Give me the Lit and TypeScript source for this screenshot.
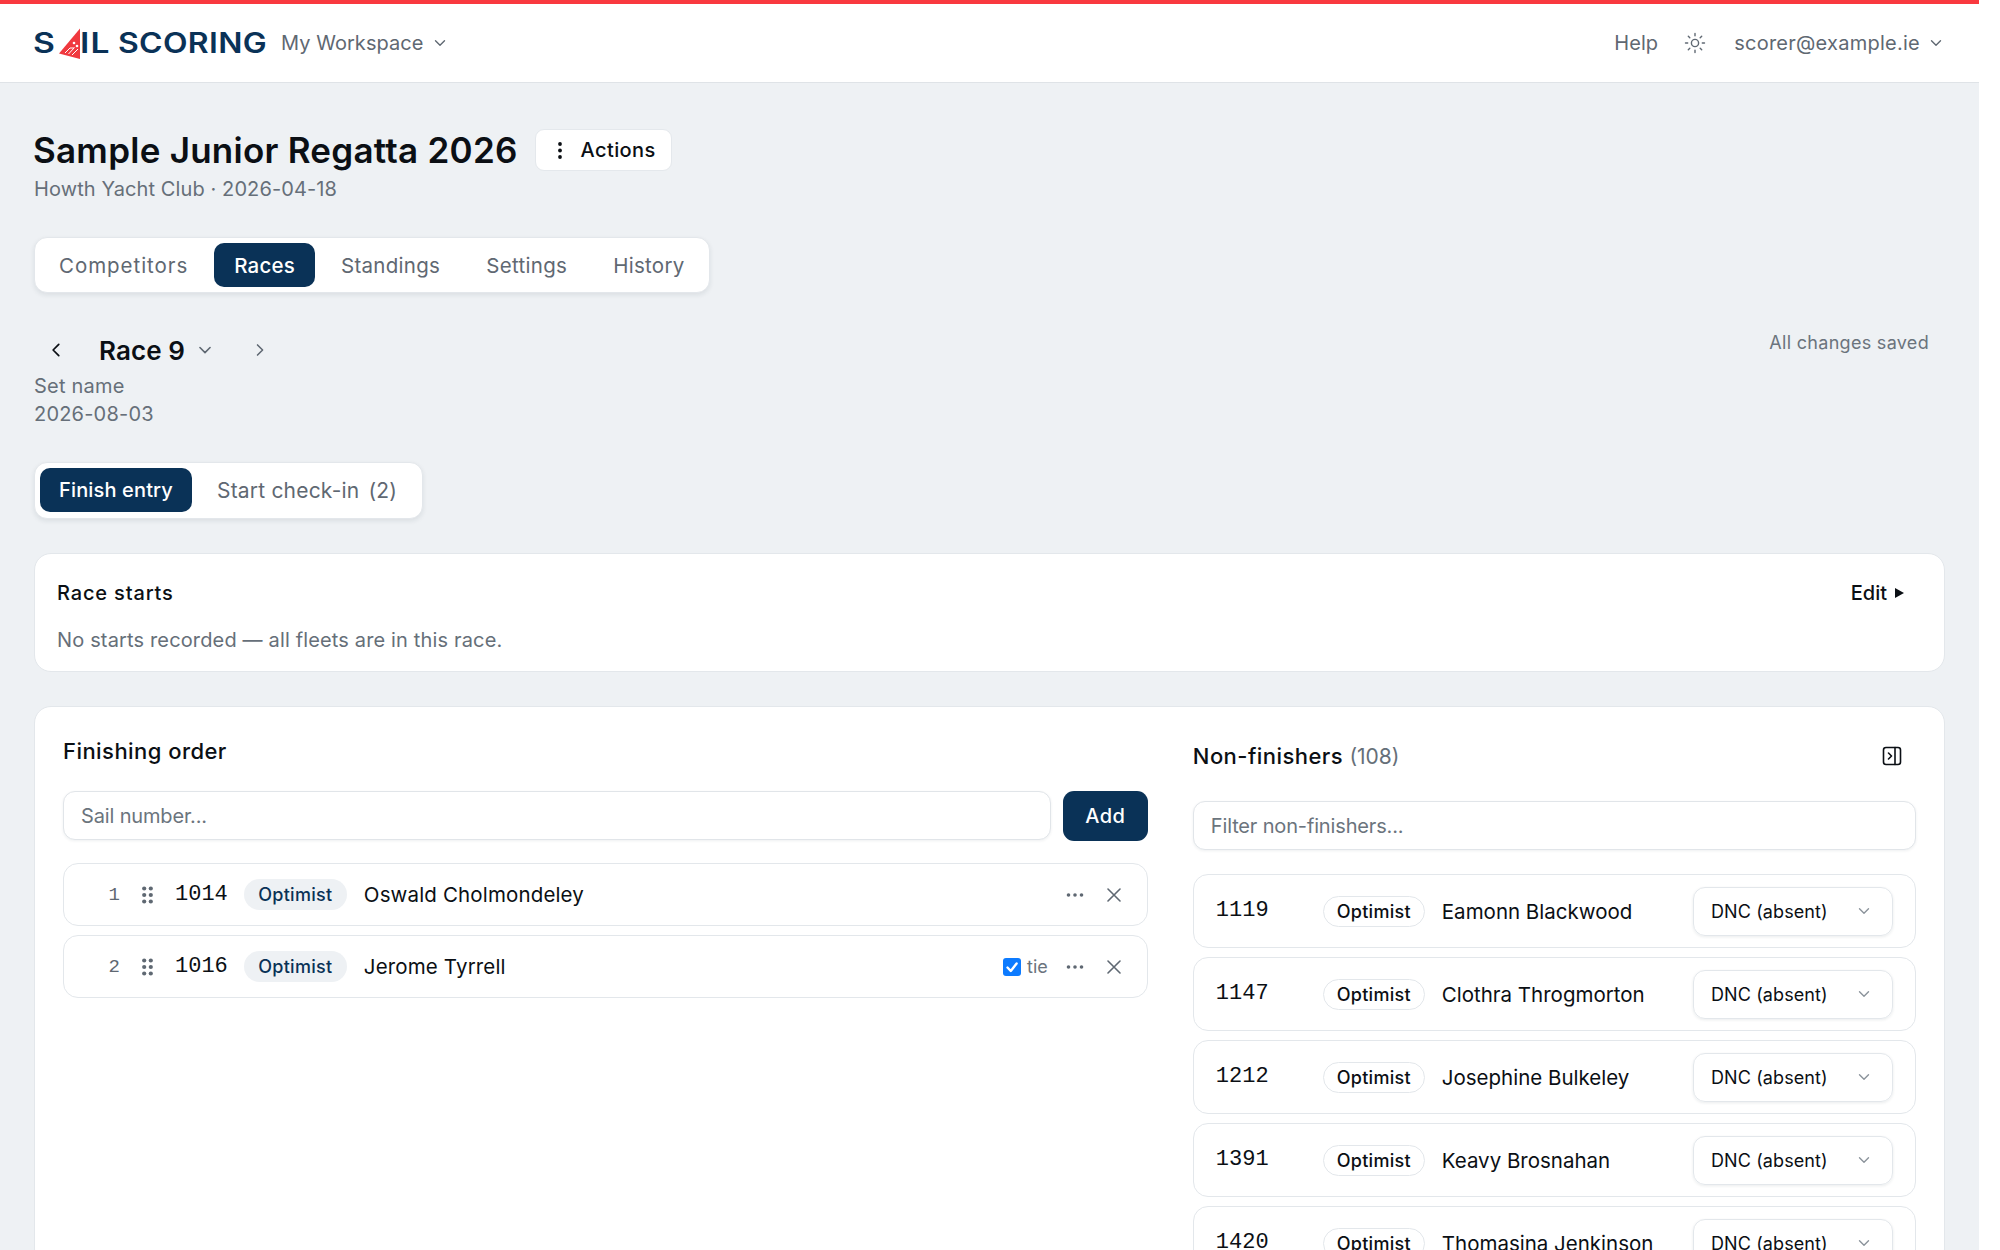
// Race scoring page: finishing order entry and non-finishers for a single race
import { css, html, LitElement, svg } from "lit";
import { customElement } from "lit/decorators.js";

interface Finisher {
  pos: number;
  sail: string;
  name: string;
  tie?: boolean;
}

interface NonFinisher {
  sail: string;
  name: string;
}

const FINISHERS: Finisher[] = [
  { pos: 1, sail: "1014", name: "Oswald Cholmondeley" },
  { pos: 2, sail: "1016", name: "Jerome Tyrrell", tie: true },
];

const NON_FINISHERS: NonFinisher[] = [
  { sail: "1119", name: "Eamonn Blackwood" },
  { sail: "1147", name: "Clothra Throgmorton" },
  { sail: "1212", name: "Josephine Bulkeley" },
  { sail: "1391", name: "Keavy Brosnahan" },
  { sail: "1420", name: "Thomasina Jenkinson" },
];

const TABS = ["Competitors", "Races", "Standings", "Settings", "History"];

const chevron = (d: string, size = 16, cls = "") => html`
  <svg class=${cls} width=${size} height=${size} viewBox="0 0 16 16" fill="none" stroke="currentColor" stroke-width="1.4" stroke-linecap="round" stroke-linejoin="round">
    <path d=${d}></path>
  </svg>
`;

const DOWN = "M3.5 5.8 8 10.3l4.5-4.5";
const LEFT = "M10.2 3.5 5.7 8l4.5 4.5";
const RIGHT = "M5.8 3.5 10.3 8l-4.5 4.5";

@customElement("app-root")
export class AppRoot extends LitElement {
  static styles = css`
    :host {
      display: flex;
      height: 1250px;
      overflow: hidden;
      background: #fff;
      font-family: Inter, "Open Sans", sans-serif;
      color: #0b0f14;
    }

    * {
      box-sizing: border-box;
    }

    .page {
      width: 1979px;
      flex: none;
      background: #eef1f4;
    }

    /* Top nav */
    .nav {
      height: 83px;
      background: #fff;
      border-top: 4px solid #f9393f;
      border-bottom: 1px solid #dfe3e7;
      display: flex;
      align-items: center;
      padding: 0 35px 0 33px;
      color: #5f6872;
      font-size: 20px;
    }

    .logo {
      display: flex;
      align-items: center;
      width: 248px;
      flex: none;
      height: 40px;
      color: #0a3257;
      font-size: 28px;
      font-weight: 600;
      line-height: 40px;
    }

    .logo-s {
      width: 26px;
      transform: scaleX(1.2);
      transform-origin: left;
    }

    .logo-il {
      width: 38px;
      margin-left: -1px;
      letter-spacing: 1px;
      transform: scaleX(1.2);
      transform-origin: left;
    }

    .logo-name {
      letter-spacing: 0.3px;
      transform: scaleX(1.14);
      transform-origin: left;
    }

    .sail {
      flex: none;
      margin-top: 1px;
    }

    .workspace {
      display: flex;
      align-items: center;
      gap: 9px;
      letter-spacing: 0.05px;
    }

    .nav-right {
      margin-left: auto;
      display: flex;
      align-items: center;
    }

    .help {
      margin-right: 26px;
      letter-spacing: 0.05px;
    }

    .user {
      display: flex;
      align-items: center;
      gap: 8px;
      margin-left: 28px;
      letter-spacing: 0.25px;
    }

    /* Page header */
    .content {
      padding: 46px 34px 0;
    }

    .title-row {
      display: flex;
      align-items: center;
      gap: 17px;
      height: 42px;
    }

    h1 {
      margin: 0 0 0 -1px;
      font-size: 35px;
      font-weight: 600;
      letter-spacing: 0.25px;
    }

    .actions {
      display: flex;
      align-items: center;
      gap: 19px;
      height: 42px;
      width: 137px;
      padding: 0 0 0 22px;
      background: #fff;
      border: 1px solid #e4e8ec;
      border-radius: 9px;
      font-size: 20px;
      font-weight: 500;
      letter-spacing: 0.4px;
      white-space: nowrap;
    }

    .actions svg {
      flex: none;
    }

    .subtitle {
      margin-top: 6px;
      line-height: 24px;
      font-size: 20px;
      color: #666f79;
      letter-spacing: 0.1px;
    }

    .seg {
      display: inline-flex;
      gap: 6px;
      padding: 5px;
      background: #fff;
      border: 1px solid #e3e7eb;
      border-radius: 13px;
      box-shadow: 0 2px 5px rgba(20, 40, 60, 0.09);
      vertical-align: top;
    }

    .tabs {
      margin-top: 36px;
      height: 56px;
      width: 676px;
    }

    .seg-item {
      display: flex;
      align-items: center;
      justify-content: center;
      height: 44px;
      border-radius: 10px;
      padding: 0 20px;
      font-size: 20.5px;
      letter-spacing: 0.3px;
      color: #5f6872;
      white-space: nowrap;
    }

    .tabs .seg-item:first-child {
      padding: 0 20px 0 19px;
      letter-spacing: 0.95px;
    }

    .seg-item.active {
      background: #0a3257;
      color: #fff;
      font-weight: 500;
      letter-spacing: 0.2px;
    }

    .race-bar {
      display: flex;
      justify-content: space-between;
      margin-top: 37px;
    }

    .race-nav {
      display: flex;
      align-items: center;
      height: 40px;
      color: #0b0f14;
    }

    .race-nav .back {
      margin-left: 12px;
    }

    .race-name {
      margin-left: 33px;
      font-size: 26px;
      font-weight: 600;
      letter-spacing: 0.1px;
    }

    .race-down {
      margin-left: 11px;
      color: #5f6872;
    }

    .race-next {
      margin-left: 37px;
      color: #5f6872;
    }

    .saved {
      margin: 0 16px 0 0;
      padding-top: 1px;
      font-size: 18px;
      line-height: 24px;
      color: #6b747d;
      letter-spacing: 0.3px;
    }

    .race-meta {
      font-size: 20px;
      line-height: 28px;
      color: #666f79;
      margin-top: 2px;
      letter-spacing: 0.2px;
    }

    .subtabs {
      margin-top: 34px;
      height: 57px;
    }

    .subtabs .seg-item {
      padding: 0 20px 0 19px;
      font-size: 21px;
      letter-spacing: 0.2px;
    }

    .subtabs .seg-item.active {
      font-size: 20px;
      padding: 0 19px;
      letter-spacing: 0.15px;
    }

    .count {
      margin-left: 9px;
    }

    .card {
      background: #fff;
      border: 1px solid #e3e7eb;
      border-radius: 17px;
    }

    .starts {
      margin-top: 34px;
      height: 119px;
      padding: 26px 22px 0;
    }

    .starts-head {
      display: flex;
      justify-content: space-between;
      align-items: center;
      height: 26px;
      font-size: 20px;
      font-weight: 500;
      letter-spacing: 0.85px;
    }

    .edit {
      display: flex;
      align-items: center;
      gap: 8px;
      margin-right: 18px;
      letter-spacing: 0;
    }

    .caret {
      width: 0;
      height: 0;
      border-left: 9px solid #0b0f14;
      border-top: 5px solid transparent;
      border-bottom: 5px solid transparent;
    }

    .starts-note {
      margin-top: 21px;
      line-height: 26px;
      font-size: 20px;
      color: #666f79;
      letter-spacing: 0.15px;
    }

    /* Finish entry panel */
    .entry {
      margin-top: 34px;
      height: 560px;
      padding: 29px 28px 0;
      display: grid;
      grid-template-columns: 3fr 2fr;
      column-gap: 45px;
    }

    .panel-title {
      margin: 0;
      font-size: 22px;
      font-weight: 500;
      line-height: 30px;
      letter-spacing: 0.45px;
    }

    .add-row {
      display: flex;
      gap: 12px;
      margin-top: 25px;
    }

    .field {
      display: flex;
      align-items: center;
      height: 49px;
      padding: 0 17px;
      background: #fff;
      border: 1px solid #e1e5e9;
      border-radius: 12px;
      box-shadow: 0 1px 3px rgba(20, 40, 60, 0.07);
      font-size: 20px;
      letter-spacing: -0.15px;
      color: #6b747d;
      flex: 1;
    }

    .add {
      width: 85px;
      height: 50px;
      display: flex;
      align-items: center;
      justify-content: center;
      background: #0a3257;
      color: #fff;
      border-radius: 11px;
      font-size: 20px;
      font-weight: 500;
      letter-spacing: 0.5px;
    }

    .finishers {
      display: flex;
      flex-direction: column;
      gap: 9px;
      margin-top: 22px;
    }

    .finisher {
      display: flex;
      align-items: center;
      height: 63px;
      border: 1px solid #e3e7eb;
      border-radius: 15px;
      font-size: 20.5px;
    }

    .pos {
      width: 56px;
      text-align: right;
      font-family: "Liberation Mono", monospace;
      font-size: 19px;
      color: #5f6872;
    }

    .grip {
      margin-left: 22px;
      color: #5f6872;
    }

    .sail-no {
      font-family: "Liberation Mono", monospace;
      font-size: 22px;
      letter-spacing: 0;
    }

    .finisher .sail-no {
      margin-left: 22px;
    }

    .pill {
      display: flex;
      align-items: center;
      justify-content: center;
      border-radius: 16px;
      font-size: 18px;
      font-weight: 500;
      letter-spacing: 0.3px;
    }

    .finisher .pill {
      width: 103px;
      height: 31px;
      margin-left: 16px;
      background: #eef1f4;
      color: #0a3257;
    }

    .finisher .who {
      margin-left: 17px;
      letter-spacing: 0.15px;
    }

    .row-end {
      margin-left: auto;
      display: flex;
      align-items: center;
      color: #5f6872;
    }

    .tie {
      display: flex;
      align-items: center;
      gap: 6px;
      margin-right: 18px;
      font-size: 18px;
      color: #6b747d;
    }

    .check {
      width: 18px;
      height: 18px;
      border-radius: 3px;
      background: #0d7bff;
    }

    .more {
      margin-right: 23px;
    }

    .remove {
      margin-right: 26px;
    }

    .nf-head {
      display: flex;
      align-items: center;
      justify-content: space-between;
      margin-top: 5px;
      height: 30px;
    }

    .nf-count {
      font-size: 21px;
      font-weight: 400;
      color: #666f79;
      letter-spacing: 0;
    }

    .panel-icon {
      margin-right: 14px;
    }

    .filter {
      margin-top: 30px;
      flex: none;
    }

    .nf-list {
      display: flex;
      flex-direction: column;
      gap: 9px;
      margin-top: 24px;
    }

    .nf {
      display: flex;
      align-items: center;
      height: 74px;
      flex: none;
      padding-left: 22px;
      border: 1px solid #e3e7eb;
      border-radius: 15px;
      font-size: 20.5px;
    }

    .nf .sail-no {
      width: 107px;
      margin-top: -1px;
    }

    .nf .pill {
      width: 102px;
      height: 31px;
      border: 1px solid #e3e7eb;
      background: #fff;
      color: #0b0f14;
    }

    .nf .who {
      margin-left: 17px;
    }

    .select {
      margin-left: auto;
      margin-right: 22px;
      width: 200px;
      height: 49px;
      display: flex;
      align-items: center;
      justify-content: space-between;
      padding: 0 20px 0 17px;
      border: 1px solid #e3e7eb;
      border-radius: 12px;
      box-shadow: 0 1px 3px rgba(20, 40, 60, 0.09);
      font-size: 18px;
      letter-spacing: 0.1px;
    }

    .select svg {
      color: #8b939b;
    }
  `;

  private renderLogo() {
    return html`
      <div class="logo" aria-label="Sail Scoring">
        <span class="logo-s">S</span>
        <svg class="sail" width="22" height="32" viewBox="0 0 22 32">
          <path d="M21 0.5 21 31 0 25.5Z" fill="#f0393f"></path>
          ${svg`<path d="M6 25l5-5h4M9.5 26l6-6.5M13 27l6-6" stroke="#fff" stroke-width="1" fill="none"></path>
          <circle cx="15" cy="15" r="1.3" fill="#fff"></circle>
          <circle cx="18" cy="18" r="1.3" fill="#fff"></circle>`}
        </svg>
        <span class="logo-il">IL</span>
        <span class="logo-name">SCORING</span>
      </div>
    `;
  }

  private renderSun() {
    return html`
      <svg width="22" height="22" viewBox="0 0 22 22" fill="none" stroke="currentColor" stroke-width="1.4" stroke-linecap="round">
        <circle cx="11" cy="11" r="3.6"></circle>
        <path d="M11 1.5v2.2M11 18.3v2.2M1.5 11h2.2M18.3 11h2.2M4.3 4.3l1.5 1.5M16.2 16.2l1.5 1.5M4.3 17.7l1.5-1.5M16.2 5.8l1.5-1.5"></path>
      </svg>
    `;
  }

  private renderDots() {
    return html`
      <svg class="more" width="18" height="6" viewBox="0 0 18 6" fill="currentColor">
        <circle cx="2.5" cy="3" r="1.8"></circle>
        <circle cx="9" cy="3" r="1.8"></circle>
        <circle cx="15.5" cy="3" r="1.8"></circle>
      </svg>
    `;
  }

  private renderFinisher(f: Finisher) {
    return html`
      <div class="finisher">
        <span class="pos">${f.pos}</span>
        <svg class="grip" width="11" height="18" viewBox="0 0 11 18" fill="currentColor">
          <circle cx="2.2" cy="2.5" r="2.1"></circle>
          <circle cx="8.8" cy="2.5" r="2.1"></circle>
          <circle cx="2.2" cy="9" r="2.1"></circle>
          <circle cx="8.8" cy="9" r="2.1"></circle>
          <circle cx="2.2" cy="15.5" r="2.1"></circle>
          <circle cx="8.8" cy="15.5" r="2.1"></circle>
        </svg>
        <span class="sail-no">${f.sail}</span>
        <span class="pill">Optimist</span>
        <span class="who">${f.name}</span>
        <div class="row-end">
          ${f.tie
            ? html`<label class="tie">
                <svg class="check" viewBox="0 0 18 18" fill="none" stroke="#fff" stroke-width="2.4" stroke-linecap="round" stroke-linejoin="round">
                  <path d="M4.5 9.5 7.8 13l5.8-7.5"></path>
                </svg>
                tie
              </label>`
            : ""}
          ${this.renderDots()}
          <svg class="remove" width="14" height="14" viewBox="0 0 14 14" stroke="currentColor" stroke-width="1.6" stroke-linecap="round">
            <path d="M1 1l12 12M13 1 1 13"></path>
          </svg>
        </div>
      </div>
    `;
  }

  private renderNonFinisher(n: NonFinisher) {
    return html`
      <div class="nf">
        <span class="sail-no">${n.sail}</span>
        <span class="pill">Optimist</span>
        <span class="who">${n.name}</span>
        <div class="select">DNC (absent) ${chevron(DOWN, 16)}</div>
      </div>
    `;
  }

  render() {
    return html`
      <div class="page">
        <header class="nav">
          ${this.renderLogo()}
          <div class="workspace">My Workspace ${chevron(DOWN, 16)}</div>
          <div class="nav-right">
            <span class="help">Help</span>
            ${this.renderSun()}
            <div class="user">scorer@example.ie ${chevron(DOWN, 16)}</div>
          </div>
        </header>

        <main class="content">
          <div class="title-row">
            <h1>Sample Junior Regatta 2026</h1>
            <div class="actions">
              <svg width="4" height="17" viewBox="0 0 4 17" fill="currentColor">
                <circle cx="2" cy="2" r="1.9"></circle>
                <circle cx="2" cy="8.5" r="1.9"></circle>
                <circle cx="2" cy="15" r="1.9"></circle>
              </svg>
              Actions
            </div>
          </div>
          <div class="subtitle">Howth Yacht Club · 2026-04-18</div>

          <div class="seg tabs">
            ${TABS.map((t) => html`<div class="seg-item ${t === "Races" ? "active" : ""}">${t}</div>`)}
          </div>

          <div class="race-bar">
            <div class="race-nav">
              ${chevron(LEFT, 20, "back")}
              <span class="race-name">Race 9</span>
              ${chevron(DOWN, 18, "race-down")}
              ${chevron(RIGHT, 18, "race-next")}
            </div>
            <div class="saved">All changes saved</div>
          </div>
          <div class="race-meta">Set name<br />2026-08-03</div>

          <div>
            <div class="seg subtabs">
              <div class="seg-item active">Finish entry</div>
              <div class="seg-item">Start check-in <span class="count">(2)</span></div>
            </div>
          </div>

          <section class="card starts">
            <div class="starts-head">
              <span>Race starts</span>
              <span class="edit">Edit <span class="caret"></span></span>
            </div>
            <div class="starts-note">No starts recorded — all fleets are in this race.</div>
          </section>

          <section class="card entry">
            <div>
              <h2 class="panel-title">Finishing order</h2>
              <div class="add-row">
                <div class="field">Sail number...</div>
                <div class="add">Add</div>
              </div>
              <div class="finishers">${FINISHERS.map((f) => this.renderFinisher(f))}</div>
            </div>
            <div>
              <div class="nf-head">
                <h2 class="panel-title">Non-finishers <span class="nf-count">(108)</span></h2>
                <svg class="panel-icon" width="20" height="20" viewBox="0 0 20 20" fill="none" stroke="#0b0f14" stroke-width="1.6" stroke-linecap="round" stroke-linejoin="round">
                  <rect x="1.5" y="1.5" width="17" height="17" rx="2.5"></rect>
                  <path d="M13 1.5v17M6.5 7l3 3-3 3"></path>
                </svg>
              </div>
              <div class="field filter">Filter non-finishers...</div>
              <div class="nf-list">${NON_FINISHERS.map((n) => this.renderNonFinisher(n))}</div>
            </div>
          </section>
        </main>
      </div>
    `;
  }
}
